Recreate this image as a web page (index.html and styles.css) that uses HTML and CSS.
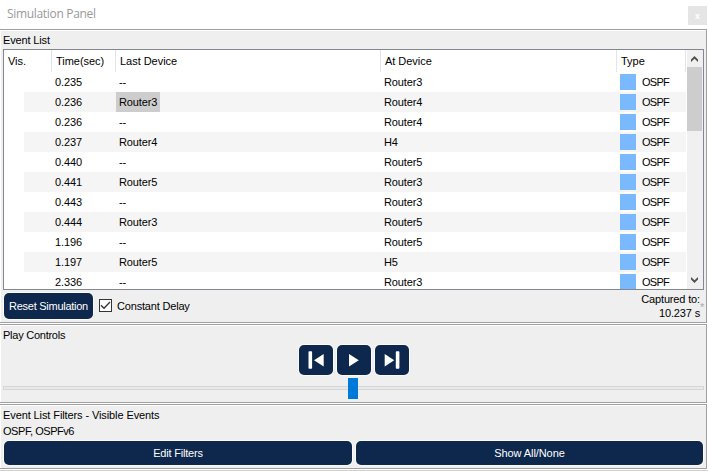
FILE: index.html
```html
<!DOCTYPE html>
<html lang="en">
<head>
<meta charset="utf-8">
<title>Simulation Panel</title>
<link rel="stylesheet" href="styles.css">
</head>
<body>
<header class="titlebar"><h1>Simulation Panel</h1><button class="close">x</button></header>
<section class="panel events">
  <h2>Event List</h2>
  <div class="list">
    <div class="rows">
      <div class="row head"><span>Vis.</span><span>Time(sec)</span><span>Last Device</span><span>At Device</span><span>Type</span></div>
      <div class="row"><i></i><span>0.235</span><span>--</span><span>Router3</span><span class="type">OSPF</span></div>
      <div class="row"><i></i><span>0.236</span><span><b class="selected">Router3</b></span><span>Router4</span><span class="type">OSPF</span></div>
      <div class="row"><i></i><span>0.236</span><span>--</span><span>Router4</span><span class="type">OSPF</span></div>
      <div class="row"><i></i><span>0.237</span><span>Router4</span><span>H4</span><span class="type">OSPF</span></div>
      <div class="row"><i></i><span>0.440</span><span>--</span><span>Router5</span><span class="type">OSPF</span></div>
      <div class="row"><i></i><span>0.441</span><span>Router5</span><span>Router3</span><span class="type">OSPF</span></div>
      <div class="row"><i></i><span>0.443</span><span>--</span><span>Router3</span><span class="type">OSPF</span></div>
      <div class="row"><i></i><span>0.444</span><span>Router3</span><span>Router5</span><span class="type">OSPF</span></div>
      <div class="row"><i></i><span>1.196</span><span>--</span><span>Router5</span><span class="type">OSPF</span></div>
      <div class="row"><i></i><span>1.197</span><span>Router5</span><span>H5</span><span class="type">OSPF</span></div>
      <div class="row"><i></i><span>2.336</span><span>--</span><span>Router3</span><span class="type">OSPF</span></div>
    </div>
    <div class="scrollbar">
      <svg width="16" height="17" viewBox="0 0 16 17"><path d="M4 12V9.5L7.5 6L11 9.5V12L7.5 8.8Z"/></svg>
      <div class="thumb"></div>
      <svg width="16" height="17" viewBox="0 0 16 17"><path d="M4 5V7.5L7.5 11L11 7.5V5L7.5 8.2Z"/></svg>
    </div>
  </div>
  <div class="actions">
    <button class="btn reset">Reset Simulation</button>
    <span class="check"><svg width="11" height="11" viewBox="0 0 11 11"><path d="M1 5.2L4 8.3L10 2"/></svg></span>
    <span class="delay">Constant Delay</span>
    <p class="captured">Captured to:<br>10.237 s</p><span class="star">*</span>
  </div>
</section>
<section class="panel play">
  <h2>Play Controls</h2>
  <div class="transport">
    <button class="btn"><svg width="34" height="30" viewBox="0 0 34 30"><rect x="9.5" y="6.2" width="3.6" height="17.6" rx=".8"/><path d="M24.7 9V21.5L15 15.2Z"/></svg></button>
    <button class="btn"><svg width="34" height="30" viewBox="0 0 34 30"><path d="M12 9V21.5L21.8 15.2Z"/></svg></button>
    <button class="btn"><svg width="34" height="30" viewBox="0 0 34 30"><path d="M9.7 9V21.5L19.2 15.2Z"/><rect x="20.8" y="6.2" width="3.6" height="17.6" rx=".8"/></svg></button>
  </div>
  <div class="slider"><div class="groove"><div class="handle"></div></div></div>
</section>
<section class="panel filters">
  <h2>Event List Filters - Visible Events</h2>
  <p>OSPF, OSPFv6</p>
  <div class="filter-buttons"><button class="btn">Edit Filters</button><button class="btn">Show All/None</button></div>
</section>
<footer class="edge"></footer>
</body>
</html>
```
FILE: styles.css
```css
* { box-sizing: border-box; margin: 0; padding: 0; }
body {
  width: 708px; height: 471px; overflow: hidden; background: #fff; color: #000;
  font: 11px/14px "Liberation Sans", Arial, sans-serif;
}
button { border: 0; font: inherit; }
.titlebar { height: 29px; display: flex; justify-content: space-between; padding-right: 1px; }
.titlebar h1 { font: 12px/16px "Open Sans", sans-serif; letter-spacing: -.32px; color: #999; padding: 6px 0 0 7px; }
.close { width: 19px; height: 19px; margin-top: 6px; background: #e5e5e5; color: #fff; font: 700 9px/18px "Liberation Sans", sans-serif; }
.panel {
  width: 707px; background: #efefef; border: solid #a0a0a0; border-width: 1px 1px 1px 0;
  box-shadow: inset 1px 1px #fff; padding-left: 3px; margin-bottom: 1px;
}
.panel h2 { font: inherit; letter-spacing: -.15px; }
.events { height: 294px; }
.events h2 { padding-top: 3px; height: 19px; }
.list { width: 701px; height: 241px; border: 1px solid #828790; background: #fff; display: flex; overflow: hidden; }
.rows { width: 683px; flex: none; }
.row { display: grid; grid-template-columns: 47px 64px 265px 236px 70px; height: 20px; line-height: 20px; width: 682px; letter-spacing: -.12px; }
.row span { padding-left: 4px; white-space: nowrap; }
.row:nth-child(odd) { background: linear-gradient(90deg, #fff 20px, #f5f5f5 20px); }
.row.head { height: 22px; line-height: 22px; background: #fff; letter-spacing: -.03px; }
.row.head span { padding-left: 5px; border-right: 1px solid #e5e5e5; }
.row.head span:first-child { width: 48px; padding-left: 4px; }
.row.head span:nth-child(n+2) { width: calc(100% + 1px); }
.row.head span:last-child { width: 100%; }
.row .selected { display: inline-block; height: 20px; width: 44px; font-weight: 400; background: #cdcdcd; margin-left: -3px; padding-left: 3px; vertical-align: top; }
.row .type { display: flex; align-items: center; gap: 6px; letter-spacing: -.75px; }
.type::before { content: ""; width: 16px; height: 16px; background: #7ab9fe; }
.scrollbar { width: 16px; background: #f0f0f0; display: flex; flex-direction: column; }
.scrollbar svg { fill: #505050; flex: none; }
.scrollbar svg:last-child { margin-top: auto; }
.thumb { width: 15px; height: 64px; background: #cdcdcd; }
.btn { background: #0d274d; color: #fff; border-radius: 5px; box-shadow: 0 0 0 1px #fafafa; }
.actions { display: flex; padding-top: 3px; }
.reset { width: 89px; height: 26px; margin-left: 1px; letter-spacing: -.27px; }
.check { width: 13px; height: 13px; border: 1px solid #333; background: #fff; margin: 6px 0 0 6px; }
.check svg { display: block; fill: none; stroke: #333; stroke-width: 1.3; }
.delay { margin: 6px 0 0 5px; letter-spacing: -.18px; }
.captured { margin: -1px 0 0 auto; text-align: right; letter-spacing: -.15px; }
.star { width: 6px; color: #aaa; padding-top: 7px; }
.play { height: 79px; }
.play h2 { padding-top: 3px; height: 20px; letter-spacing: -.25px; }
.transport { display: flex; gap: 4px; margin-left: 296px; }
.transport .btn { width: 34px; height: 30px; }
.transport svg { display: block; fill: #fff; stroke: none; }
.slider { padding-top: 11px; }
.groove { width: 701px; height: 4px; border: 1px solid #d6d6d6; background: #e7eaea; padding-left: 344px; }
.handle { width: 10px; height: 21px; background: #007ad9; margin-top: -9px; }
.filters { height: 65px; }
.filters h2 { padding-top: 3px; height: 19px; letter-spacing: -.1px; }
.filters p { height: 17px; line-height: 14px; letter-spacing: -.45px; }
.filter-buttons { display: flex; gap: 4px; margin-left: 1px; }
.filter-buttons .btn { width: 348px; height: 24px; letter-spacing: -.2px; }
.filter-buttons .btn:last-child { width: 347px; letter-spacing: -.08px; }
.edge { height: 1px; background: #d0d0d0; }
```
